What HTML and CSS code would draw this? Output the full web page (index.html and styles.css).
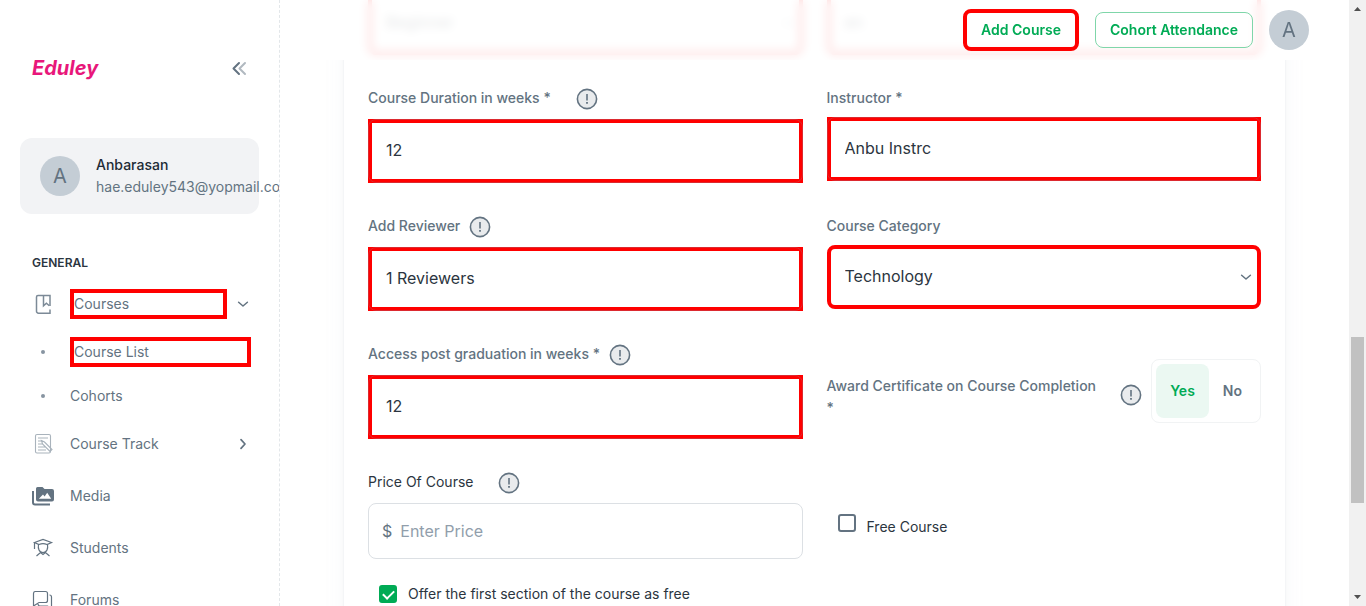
FILE: index.html
```html
<!DOCTYPE html>
<html lang="en">
<head>
<meta charset="utf-8">
<meta name="viewport" content="width=device-width, initial-scale=1">
<title>Eduley - Add Course</title>
<link rel="stylesheet" href="styles.css">
</head>
<body>
<svg class="sprite" aria-hidden="true">
  <symbol id="i-info" viewBox="0 0 24 24"><circle cx="12" cy="12" r="9.600" fill="#e9ebed" stroke="#637381" stroke-width="1.600"/><path d="M12 7v6.400" stroke="#637381" stroke-width="1.600"/><path d="M12 15v1.800" stroke="#637381" stroke-width="1.800"/></symbol>
  <symbol id="i-down" viewBox="0 0 16 16"><path d="M3.600 6.200 8 10l4.400-3.800" fill="none" stroke="#637381" stroke-width="1.500" stroke-linecap="round" stroke-linejoin="round"/></symbol>
</svg>
<div class="app">
  <aside class="sidebar">
    <div class="brand">
      <a class="logo" href="#">Eduley</a>
      <button class="plain" type="button" aria-label="Collapse menu">
        <svg width="24" height="24" viewBox="0 0 24 24" fill="none" stroke-width="2" stroke-linecap="round" stroke-linejoin="round"><path d="m18 7-5.500 5.500L18 18" stroke="#b1b9c0"/><path d="M12 7l-5.500 5.500L12 18" stroke="#637381"/></svg>
      </button>
    </div>
    <a class="profile" href="#">
      <span class="avatar">A</span>
      <span class="who"><b>Anbarasan</b><span>hae.eduley543@yopmail.com</span></span>
    </a>
    <nav class="nav">
      <h2>General</h2>
      <a class="item" href="#">
        <svg class="icon" viewBox="0 0 22 22" fill="none" stroke="#7c8a97" stroke-width="1.500"><path d="M18 13V2.500H6a1.500 1.500 0 0 0-1.500 1.500v14A2 2 0 0 0 6.500 20.200H18v-3.700"/><path d="M11.500 2.500v10.300l2.900-2.500 2.900 2.500"/></svg>
        <span class="marked">Courses</span>
        <svg class="arrow"><use href="#i-down"/></svg>
      </a>
      <a class="item sub" href="#"><span class="icon dot"></span><span class="marked">Course List</span></a>
      <a class="item sub" href="#"><span class="icon dot"></span><span>Cohorts</span></a>
      <a class="item" href="#">
        <svg class="icon" viewBox="0 0 22 22" fill="none" stroke="#a9b3bc" stroke-width="1.100"><rect x="3.500" y="1.500" width="15" height="18.500" rx="1.500"/><path d="M6 5h10M6 8h4M6 11h5M6 14h7M6 17h8M9.500 7.500l1 3.500 7.500 7.500 2-2-7.500-7.500z"/></svg>
        <span class="grow">Course Track</span>
        <svg class="arrow" viewBox="0 0 16 16"><path d="M6 3.600 10 8l-4 4.400" fill="none" stroke="#637381" stroke-width="1.700" stroke-linecap="round" stroke-linejoin="round"/></svg>
      </a>
      <a class="item" href="#">
        <svg class="icon" viewBox="0 0 22 22"><path d="M1 6v11.500A2 2 0 0 0 3 19.500h15" fill="none" stroke="#637381" stroke-width="2"/><path fill="#637381" fill-rule="evenodd" d="M5.500 2h5l2 2H20a2 2 0 0 1 2 2v8.500a2 2 0 0 1-2 2H6a2 2 0 0 1-2-2V3.500A1.500 1.500 0 0 1 5.500 2zm1.300 11.800h12.400l-4-6-2.600 3.600-1.600-2z"/></svg>
        <span>Media</span>
      </a>
      <a class="item" href="#">
        <svg class="icon" viewBox="0 0 22 22" fill="none" stroke="#637381" stroke-width="1.200"><path d="M2.500 5.500 11 2.500l8.500 3-4.500 2q-4-1.600-8 0z"/><path d="M2.500 5.500V12M6.500 7.500c-.7 4 .5 8 4.500 8s5.200-4 4.500-8M4.500 19l4-3.500 2.500 2 2.500-2 4 3.500"/></svg>
        <span>Students</span>
      </a>
      <a class="item" href="#">
        <svg class="icon" viewBox="0 0 22 22" fill="none" stroke="#637381" stroke-width="1.200"><path d="M3 2.500h10.500a2 2 0 0 1 2 2v7a2 2 0 0 1-2 2H7L1.500 17V4.500a2 2 0 0 1 1.500-2z"/><path d="M17.500 6a2 2 0 0 1 2 2v12l-4-3H8a2 2 0 0 1-2-2"/></svg>
        <span>Forums</span>
      </a>
    </nav>
  </aside>

  <main class="main">
    <header class="topbar">
      <button class="btn add" type="button">Add Course</button>
      <button class="btn" type="button">Cohort Attendance</button>
      <span class="avatar">A</span>
    </header>
    <form class="card">
      <div class="field">
        <div class="label"><label for="level">Course Level *</label></div>
        <div class="select"><select id="level"><option>Beginner</option></select><svg class="arrow"><use href="#i-down"/></svg></div>
      </div>
      <div class="field">
        <div class="label"><label for="lang">Language *</label></div>
        <div class="select"><select id="lang"><option>en</option></select></div>
      </div>

      <div class="field">
        <div class="label wide"><label for="weeks">Course Duration in weeks *</label><svg class="info"><use href="#i-info"/></svg></div>
        <div class="box"><input id="weeks" type="text" value="12"></div>
      </div>
      <div class="field">
        <div class="label"><label for="inst">Instructor *</label></div>
        <div class="box"><input id="inst" type="text" value="Anbu Instrc"></div>
      </div>

      <div class="field">
        <div class="label"><label for="rev">Add Reviewer</label><svg class="info"><use href="#i-info"/></svg></div>
        <div class="box"><input id="rev" type="text" value="1 Reviewers"></div>
      </div>
      <div class="field">
        <div class="label"><label for="cat">Course Category</label></div>
        <div class="select"><select id="cat"><option>Technology</option></select><svg class="arrow"><use href="#i-down"/></svg></div>
      </div>

      <div class="field">
        <div class="label"><label for="access">Access post graduation in weeks *</label><svg class="info"><use href="#i-info"/></svg></div>
        <div class="box"><input id="access" type="text" value="12"></div>
      </div>
      <div class="award">
        <span class="award-text" id="award">Award Certificate on Course Completion<br>*</span>
        <svg class="info"><use href="#i-info"/></svg>
        <div class="toggle" role="group" aria-labelledby="award">
          <button class="on" type="button" aria-pressed="true">Yes</button>
          <button type="button" aria-pressed="false">No</button>
        </div>
      </div>

      <div class="field">
        <div class="label wide"><label class="regular" for="price">Price Of Course</label><svg class="info"><use href="#i-info"/></svg></div>
        <div class="price"><span>$</span><input id="price" type="text" placeholder="Enter Price"></div>
      </div>
      <div class="free">
        <input class="check" id="free" type="checkbox"><label for="free">Free Course</label>
      </div>
      <div class="offer">
        <input class="check" id="offer" type="checkbox" checked><label for="offer">Offer the first section of the course as free</label>
      </div>
    </form>
  </main>

  <div class="scroll" aria-hidden="true">
    <svg width="17" height="17" viewBox="0 0 17 17"><path d="M5 11h7L8.500 7z" fill="#505050"/></svg>
    <div class="before"></div><div class="thumb"></div><div class="after"></div>
    <svg width="17" height="17" viewBox="0 0 17 17"><path d="M5 6h7l-3.500 4z" fill="#505050"/></svg>
  </div>
</div>
</body>
</html>
```
FILE: styles.css
```css
* { box-sizing: border-box; }
body {
  margin: 0;
  font: 14px/22px Inter, "Liberation Sans", sans-serif;
  color: #2b3540;
  background: #fff;
}
a { color: inherit; text-decoration: none; }
button, input, select { font: inherit; color: inherit; }
svg { flex: none; display: block; }
.sprite { position: absolute; width: 0; height: 0; }

.app {
  display: grid;
  grid-template-columns: 280px 1fr 17px;
  height: 100vh;
  overflow: hidden;
}

/* Sidebar */
.sidebar {
  padding: 56px 20px 0;
  border-right: 1px dashed #e3e7ea;
  overflow: hidden;
}
.brand {
  display: flex;
  align-items: center;
  justify-content: space-between;
  height: 24px;
  padding: 0 8px 0 12px;
}
.logo {
  font: italic 700 20px/24px Inter, sans-serif;
  color: #e8177a;
}
.plain { padding: 0; border: 0; background: none; }
.profile {
  display: flex;
  align-items: center;
  gap: 16px;
  margin-top: 58px;
  padding: 16px 20px;
  border-radius: 12px;
  background: #f2f3f5;
}
.avatar {
  flex: none;
  width: 40px;
  height: 40px;
  border-radius: 50%;
  background: #c4cdd5;
  color: #637381;
  font-size: 20px;
  line-height: 40px;
  text-align: center;
}
.who { display: flex; flex-direction: column; color: #637381; white-space: nowrap; }
.who b { color: #212b36; font-weight: 500; }
.nav { display: flex; flex-direction: column; gap: 4px; margin-top: 40px; }
.nav h2 {
  margin: 0;
  padding: 0 12px 4px;
  font-size: 12px;
  line-height: 18px;
  font-weight: 600;
  text-transform: uppercase;
}
.item {
  display: flex;
  align-items: center;
  height: 48px;
  padding: 0 8px 0 12px;
  color: #637381;
}
.item.sub { height: 40px; }
.icon { width: 22px; height: 22px; margin-right: 16px; overflow: visible; }
.dot { display: grid; place-items: center; }
.dot::before { content: ""; width: 4px; height: 4px; border-radius: 50%; background: #8794a1; }
.arrow { width: 16px; height: 16px; }
.grow { flex: 1; }
.marked { flex: 1; border: 4px solid #f00; }
.marked + .arrow { margin-left: 8px; }

/* Top bar */
.main { position: relative; overflow: hidden; }
.topbar {
  position: absolute;
  inset: 0 0 auto;
  z-index: 2;
  display: flex;
  align-items: center;
  justify-content: flex-end;
  gap: 16px;
  height: 60px;
  padding: 0 40px;
  background: rgba(255, 255, 255, 0.87);
  backdrop-filter: blur(5px);
}
.btn {
  height: 36px;
  padding: 0 14px;
  border: 1px solid #7fd6a9;
  border-radius: 8px;
  background: transparent;
  color: #00ab55;
  font-weight: 600;
}
.btn.add { height: 42px; border: 4px solid #f00; }

/* Form */
.card {
  display: grid;
  grid-template-columns: 1fr 1fr;
  gap: 32px 24px;
  margin: -63px 64px 0;
  padding: 24px;
  border-radius: 16px;
  box-shadow: 0 0 2px rgba(145, 158, 171, 0.2), 0 12px 24px -4px rgba(145, 158, 171, 0.12);
}
.label { display: flex; gap: 8px; height: 30px; }
.label:has(.info) { height: 32px; }
.label.wide { gap: 24px; }
.label label { color: #637381; font-weight: 500; }
.label .regular { color: #2b3540; font-weight: 400; }
.info { width: 24px; height: 24px; }
.box, .select { position: relative; height: 64px; font-size: 16px; }
.box input, .select select {
  display: block;
  width: 100%;
  height: 64px;
  padding: 0 14px 2px;
  border: 4px solid #f00;
  background: #fff;
  outline: 0;
  appearance: none;
}
.box::after {
  content: "";
  position: absolute;
  inset: 0;
  border: 1px solid #dc2a30;
  border-radius: 8px;
  pointer-events: none;
}
.select select { border-radius: 8px; }
.select .arrow { position: absolute; right: 7px; top: 24px; pointer-events: none; }

.award { display: flex; align-items: center; gap: 8px; }
.award-text { flex: 1; margin-top: 12px; color: #637381; font-weight: 500; }
.award .info { margin-top: 8px; }
.toggle {
  display: flex;
  height: 64px;
  padding: 4px;
  border: 1px solid #f1f3f4;
  border-radius: 8px;
}
.toggle button {
  padding: 0 14px;
  border: 0;
  border-radius: 8px;
  background: none;
  color: #637381;
  font-weight: 600;
}
.toggle .on { background: #ebf8f2; color: #00ab55; }

.price {
  display: flex;
  align-items: center;
  gap: 8px;
  height: 56px;
  padding: 0 13px;
  border: 1px solid #dce0e4;
  border-radius: 8px;
  color: #637381;
  font-size: 16px;
}
.price input { flex: 1; min-width: 0; padding: 0; border: 0; outline: 0; color: #212b36; background: none; }
.price input::placeholder { color: #919eab; opacity: 1; }

.check {
  flex: none;
  display: grid;
  place-items: center;
  width: 18px;
  height: 18px;
  margin: 0;
  border: 2px solid #637381;
  border-radius: 3px;
  appearance: none;
}
.check:checked { border-color: #00ab55; background: #00ab55; }
.check:checked::before {
  content: "";
  width: 5px;
  height: 9px;
  margin-bottom: 2px;
  border: solid #fff;
  border-width: 0 2px 2px 0;
  transform: rotate(45deg);
}
.free, .offer { display: flex; gap: 11px; padding-left: 11px; }
.free { padding-top: 43px; }
.free label { padding-top: 2px; }
.offer { grid-column: 1 / -1; align-items: center; margin-top: -8px; }

/* Scroll bar */
.scroll { display: flex; flex-direction: column; background: #f1f1f1; }
.before { flex: 320; }
.thumb { flex: 166; margin: 0 2px; background: #c1c1c1; }
.after { flex: 86; }
```
